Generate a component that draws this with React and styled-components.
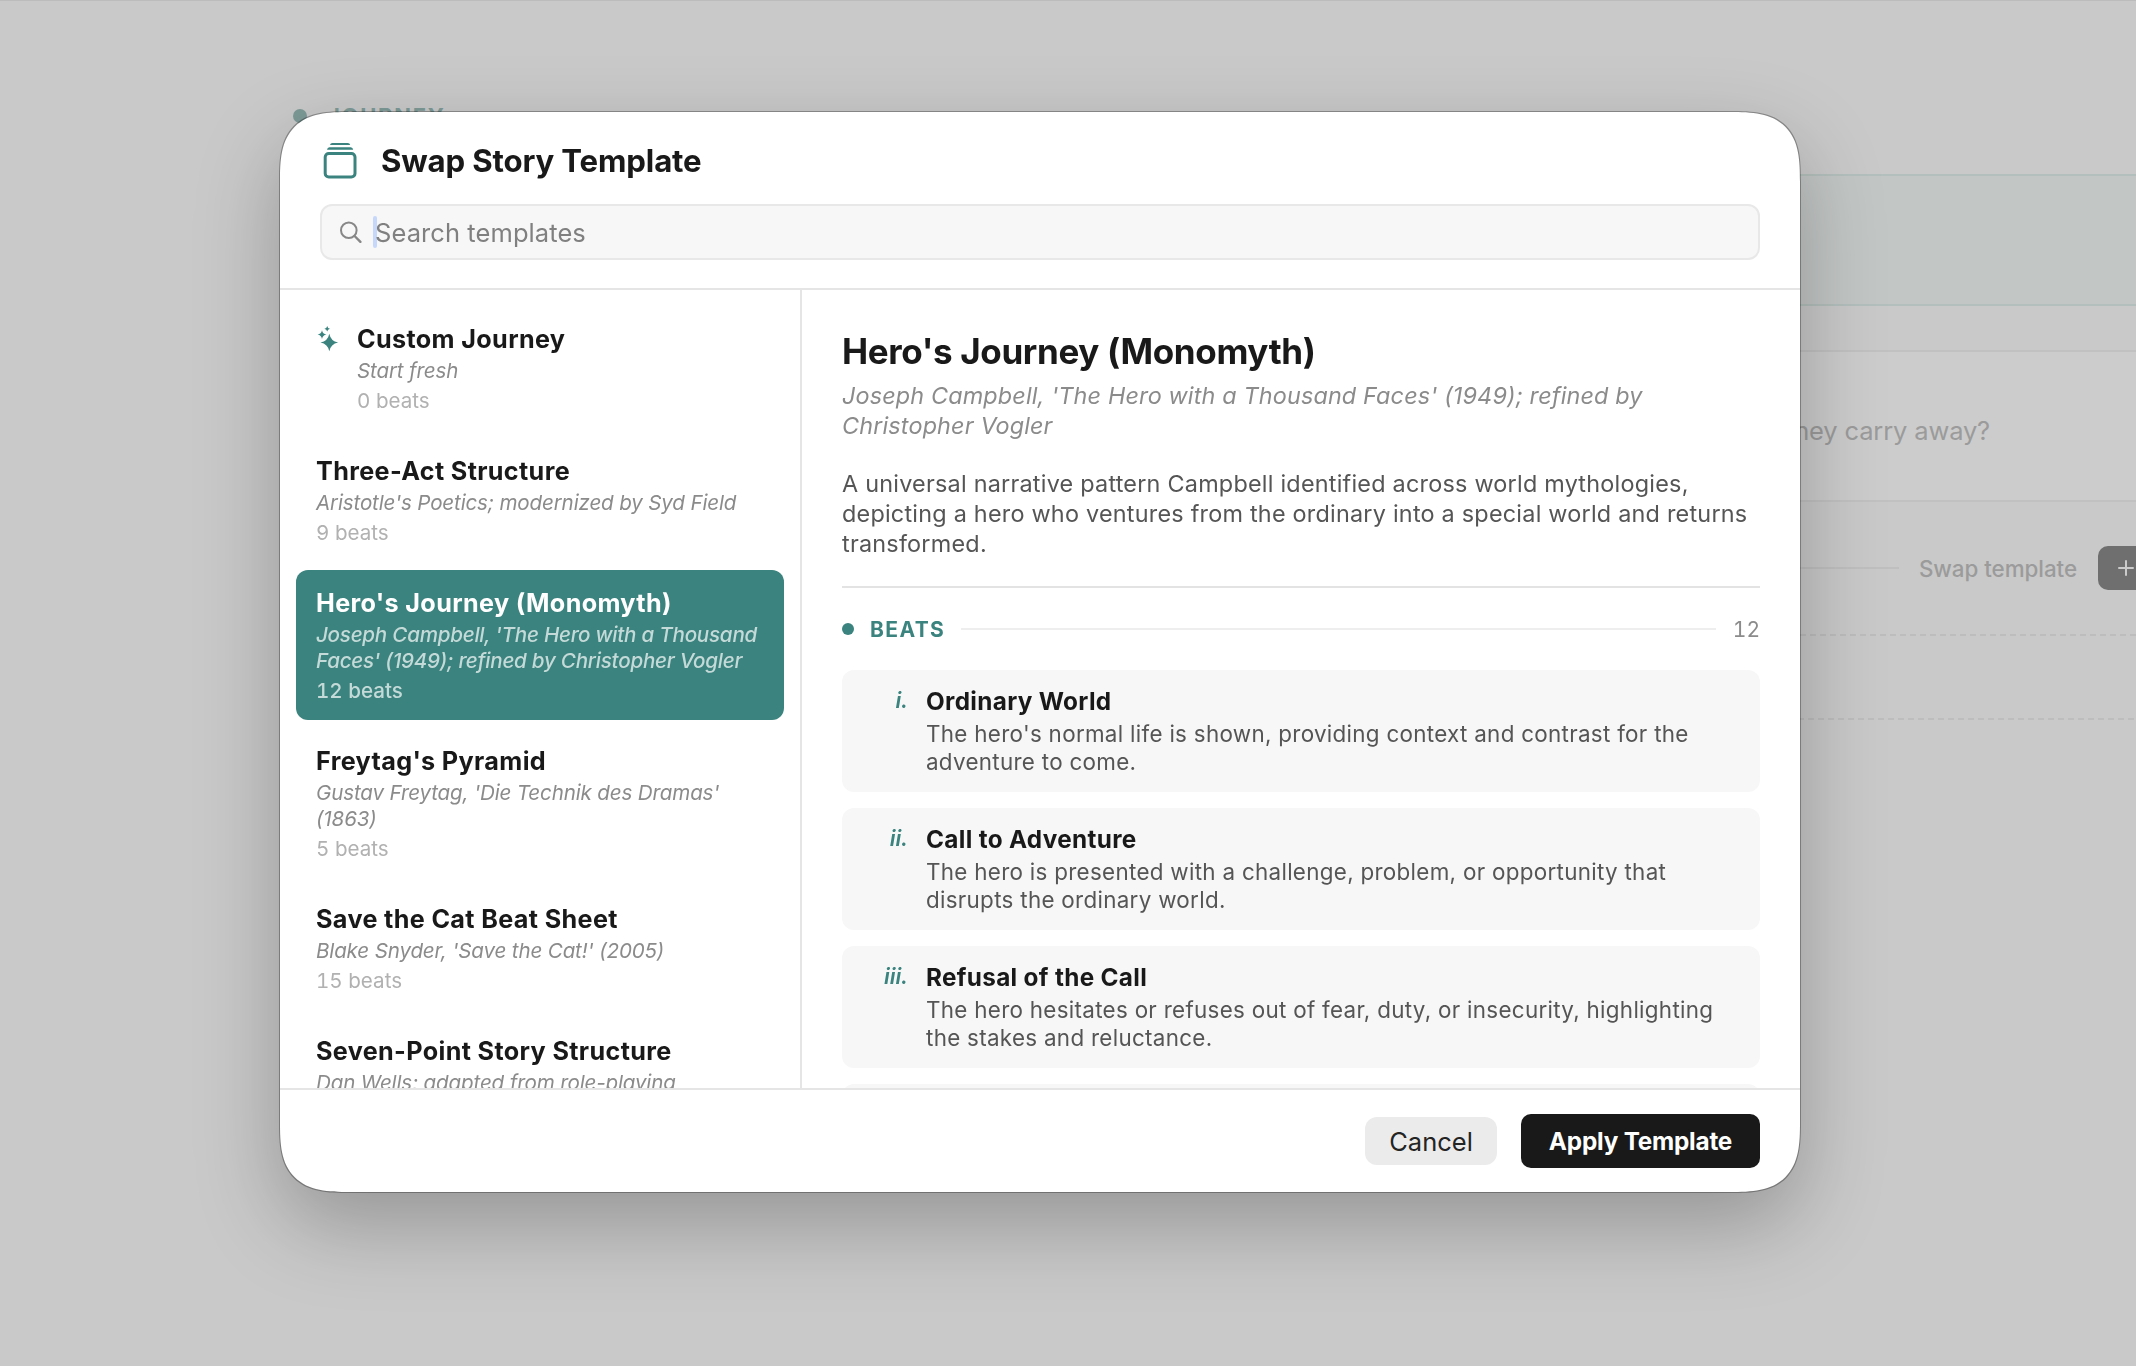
import styled, { createGlobalStyle, css } from 'styled-components';

const templates = [
    { name: 'Custom Journey', source: 'Start fresh', beats: 0, custom: true },
    { name: 'Three-Act Structure', source: "Aristotle's Poetics; modernized by Syd Field", beats: 9 },
    {
        name: "Hero's Journey (Monomyth)",
        source: "Joseph Campbell, 'The Hero with a Thousand Faces' (1949); refined by Christopher Vogler",
        beats: 12,
        selected: true,
    },
    { name: "Freytag's Pyramid", source: "Gustav Freytag, 'Die Technik des Dramas' (1863)", beats: 5 },
    { name: 'Save the Cat Beat Sheet', source: "Blake Snyder, 'Save the Cat!' (2005)", beats: 15 },
    { name: 'Seven-Point Story Structure', source: 'Dan Wells; adapted from role-playing', beats: 7 },
];

const beats = [
    {
        numeral: 'i.',
        name: 'Ordinary World',
        text: "The hero's normal life is shown, providing context and contrast for the adventure to come.",
    },
    {
        numeral: 'ii.',
        name: 'Call to Adventure',
        text: 'The hero is presented with a challenge, problem, or opportunity that disrupts the ordinary world.',
    },
    {
        numeral: 'iii.',
        name: 'Refusal of the Call',
        text: 'The hero hesitates or refuses out of fear, duty, or insecurity, highlighting the stakes and reluctance.',
    },
];

const GlobalStyle = createGlobalStyle`
    * {
        box-sizing: border-box;
    }

    body {
        margin: 0;
        overflow: hidden;
        background: #c9c9c9;
        color: #191919;
        font-family: Inter, 'Liberation Sans', sans-serif;
    }

    p, h1, h2, h3 {
        margin: 0;
    }
`;

/* ---- Page behind the dialog ---- */

const Page = styled.main`
    height: 1366px;
    padding: 99px 0 0 293px;
    border-top: 1px solid #bcbcbc;
    overflow: hidden;
`;

const PageColumn = styled.div`
    width: 1965px;
`;

const JourneyLabel = styled.h2`
    display: flex;
    align-items: center;
    gap: 20px;
    height: 32px;
    margin-bottom: 42px;
    color: #7d9a97;
    font-size: 22px;
    font-weight: 700;
    letter-spacing: 1.7px;

    &::before {
        content: '';
        width: 14px;
        height: 14px;
        border-radius: 50%;
        background: #7d9a97;
    }
`;

const Banner = styled.div`
    height: 132px;
    margin-bottom: 44px;
    border: 2px solid #b3bfbc;
    background: #c2c6c5;
`;

const PromptCard = styled.div`
    display: flex;
    align-items: center;
    justify-content: flex-end;
    height: 152px;
    padding: 8px 266px 0 0;
    border: 2px solid #c1c1c1;
    background: #cccccc;
    color: #9b9b9b;
    font-size: 25.5px;
    letter-spacing: -0.15px;
    white-space: nowrap;
`;

const PageToolbar = styled.div`
    display: flex;
    align-items: center;
    height: 132px;
`;

const PageRule = styled.div`
    flex: 1;
    height: 2px;
    margin-right: 20px;
    background: #bfbfbf;
`;

const SwapLink = styled.span`
    margin-right: 21px;
    color: #9b9b9b;
    font-size: 22.4px;
    font-weight: 550;
    letter-spacing: -0.05px;
`;

const AddButton = styled.button`
    display: flex;
    align-items: center;
    width: 160px;
    height: 44px;
    padding: 0 0 0 20px;
    border: 0;
    border-radius: 10px;
    background: #6f6f6f;
    color: #cbcbcb;
`;

const dashes = 'repeating-linear-gradient(to right, #bdbdbd 0 6px, transparent 6px 10px)';

const EmptySlot = styled.div`
    height: 86px;
    background:
        ${dashes} 7px 0 / 100% 2px no-repeat,
        ${dashes} 5px 100% / 100% 2px no-repeat;
`;

/* ---- Dialog ---- */

const Overlay = styled.div`
    position: fixed;
    inset: 0;
    padding: 112px 0 0 280px;
`;

const Dialog = styled.section`
    display: flex;
    flex-direction: column;
    width: 1520px;
    height: 1080px;
    border-radius: 70px;
    corner-shape: superellipse(1.55);
    background: #ffffff;
    box-shadow:
        0 0 0 1px rgba(0, 0, 0, 0.3),
        0 32px 84px rgba(0, 0, 0, 0.26);
`;

const Header = styled.header`
    height: 178px;
    padding: 26px 40px 0;
    border-bottom: 2px solid #e5e5e5;
`;

const TitleRow = styled.div`
    display: flex;
    align-items: center;
    gap: 21px;
    height: 44px;
    margin-bottom: 22px;
`;

const Title = styled.h1`
    padding-top: 1px;
    font-size: 31.2px;
    font-weight: 650;
    line-height: 38px;
    letter-spacing: -0.15px;
`;

const SearchField = styled.div`
    display: flex;
    align-items: center;
    height: 56px;
    padding: 0 18px;
    border: 2px solid #e8e8e8;
    border-radius: 12px;
    background: #f7f7f7;
`;

const Caret = styled.span`
    width: 4px;
    height: 32px;
    margin: 0 -2px 0 11px;
    border-radius: 2px;
    background: #c5d7fb;
`;

const Placeholder = styled.span`
    padding-top: 2px;
    color: #808080;
    font-size: 25.5px;
    line-height: 32px;
    letter-spacing: 0.08px;
`;

const Body = styled.div`
    display: flex;
    height: 798px;
`;

const Sidebar = styled.nav`
    display: flex;
    flex-direction: column;
    gap: 8px;
    width: 522px;
    padding: 16px;
    border-right: 2px solid #e5e5e5;
    overflow: hidden;
`;

const ItemSource = styled.p`
    margin: 3px 0 4px;
    color: #8b8b8b;
    font-size: 20.6px;
    font-style: italic;
    line-height: 26px;
    letter-spacing: -0.16px;
`;

const ItemBeats = styled.p`
    color: #b1b1b1;
    font-size: 20.6px;
    font-variant-numeric: tabular-nums;
    line-height: 26px;
`;

const TemplateItem = styled.div`
    display: flex;
    flex-shrink: 0;
    gap: 18px;
    padding: 17px 20px 16px;
    border-radius: 12px;

    ${(props) => props.$selected && css`
        background: #3b837e;
        color: #ffffff;

        ${ItemSource}, ${ItemBeats} {
            color: #c4dad8;
            font-weight: 500;
        }

        ${ItemSource} {
            letter-spacing: -0.24px;
        }
    `}
`;

const ItemName = styled.h3`
    font-size: 25.2px;
    font-weight: 650;
    line-height: 32px;
    letter-spacing: 0.35px;
`;

const Detail = styled.div`
    flex: 1;
    padding: 39px 40px 0;
    overflow: hidden;
`;

const DetailTitle = styled.h2`
    font-size: 35px;
    font-weight: 650;
    line-height: 44px;
    letter-spacing: -0.35px;
`;

const DetailSource = styled.p`
    margin: 8px 0 28px;
    color: #8b8b8b;
    font-size: 23.4px;
    font-style: italic;
    line-height: 30px;
    letter-spacing: 0.15px;
`;

const Description = styled.p`
    color: #555555;
    font-size: 23.4px;
    line-height: 30px;
    letter-spacing: 0.23px;
`;

const Divider = styled.div`
    height: 2px;
    margin: 27px 0 28px;
    background: #e3e3e3;
`;

const BeatsHeader = styled.div`
    display: flex;
    align-items: center;
    height: 26px;
    margin-bottom: 28px;
    color: #3a837e;
    font-size: 21px;
    font-weight: 650;
    letter-spacing: 1.4px;
`;

const BeatsDot = styled.span`
    width: 12px;
    height: 12px;
    margin-right: 16px;
    border-radius: 50%;
    background: #3a837e;
`;

const BeatsRule = styled.div`
    flex: 1;
    height: 2px;
    margin: 0 17px 0 16px;
    background: #eeeeee;
`;

const BeatsCount = styled.span`
    color: #8b8b8b;
    font-weight: 400;
    font-variant-numeric: tabular-nums;
    letter-spacing: 0;
`;

const BeatList = styled.div`
    display: flex;
    flex-direction: column;
    gap: 16px;
`;

const BeatCard = styled.article`
    display: flex;
    gap: 19px;
    min-height: 122px;
    padding: 16px 20px;
    border-radius: 12px;
    background: #f7f7f7;
`;

const Numeral = styled.span`
    width: 46px;
    color: #3a837e;
    font-size: 22px;
    font-style: italic;
    font-weight: 600;
    line-height: 28px;
    letter-spacing: -0.1px;
    text-align: right;
`;

const BeatContent = styled.div`
    flex: 1;
    margin-left: -1px;
`;

const BeatName = styled.h3`
    margin-bottom: 4px;
    font-size: 24.3px;
    font-weight: 650;
    line-height: 30px;
    letter-spacing: 0.33px;
`;

const BeatText = styled.p`
    color: #555555;
    font-size: 22.4px;
    line-height: 28px;
    letter-spacing: 0.3px;
`;

const Footer = styled.footer`
    display: flex;
    align-items: center;
    justify-content: flex-end;
    gap: 24px;
    height: 104px;
    padding: 0 40px;
    border-top: 2px solid #e5e5e5;
`;

const Button = styled.button`
    width: ${(props) => (props.$primary ? '239px' : '132px')};
    height: ${(props) => (props.$primary ? '54px' : '48px')};
    padding: 0;
    border: 0;
    border-radius: ${(props) => (props.$primary ? '10px' : '12px')};
    background: ${(props) => (props.$primary ? '#191919' : '#ebebeb')};
    color: ${(props) => (props.$primary ? '#ffffff' : '#242424')};
    font-family: inherit;
    font-size: ${(props) => (props.$primary ? '24.3px' : '25.5px')};
    font-weight: ${(props) => (props.$primary ? 650 : 400)};
    letter-spacing: ${(props) => (props.$primary ? '-0.2px' : '0')};
`;

const SparkleSlot = styled.span`
    width: 23px;
    padding-top: 3px;
`;

function StackIcon() {
    return (
        <svg width="40" height="40" viewBox="0 0 40 40" fill="#3a837e">
            <path d="M10 5 Q10.4 3 12.4 3 H27.8 Q29.8 3 30.2 5 Z" />
            <path d="M7 9.8 Q7.4 7.2 9.4 7.2 H30.8 Q32.8 7.2 33.2 9.8 Z" />
            <rect x="5.2" y="13.5" width="29.8" height="23.6" rx="3.6" fill="none" stroke="#3a837e" strokeWidth="3" />
        </svg>
    );
}

function SearchIcon() {
    return (
        <svg width="22" height="22" viewBox="0 0 22 22" fill="none" stroke="#878787" strokeWidth="2" strokeLinecap="round">
            <circle cx="8.8" cy="9.2" r="7.8" />
            <path d="M14.6 15 L20.4 20.8" strokeWidth="2.4" />
        </svg>
    );
}

function star(cx, cy, r) {
    const k = r * 0.16;
    return `M${cx} ${cy - r} Q${cx + k} ${cy - k} ${cx + r} ${cy} Q${cx + k} ${cy + k} ${cx} ${cy + r} Q${cx - k} ${cy + k} ${cx - r} ${cy} Q${cx - k} ${cy - k} ${cx} ${cy - r} Z`;
}

function SparklesIcon() {
    return (
        <svg width="23" height="28" viewBox="0 0 23 28" fill="#3a837e">
            <path d={star(13.3, 16.5, 8.8)} />
            <path d={star(6, 8.6, 4.4)} />
            <path d={star(11.2, 2.8, 2.8)} />
        </svg>
    );
}

function PlusIcon() {
    return (
        <svg width="16" height="16" viewBox="0 0 16 16" stroke="#cbcbcb" strokeWidth="2" strokeLinecap="round">
            <path d="M8 1 V15 M1 8 H15" />
        </svg>
    );
}

function JourneyPage() {
    return (
        <Page>
            <PageColumn>
                <JourneyLabel>JOURNEY</JourneyLabel>
                <Banner />
                <PromptCard>they carry away?</PromptCard>
                <PageToolbar>
                    <PageRule />
                    <SwapLink>Swap template</SwapLink>
                    <AddButton aria-label="Add">
                        <PlusIcon />
                    </AddButton>
                </PageToolbar>
                <EmptySlot />
            </PageColumn>
        </Page>
    );
}

function TemplateList() {
    return (
        <Sidebar>
            {templates.map((item) => (
                <TemplateItem key={item.name} $selected={item.selected}>
                    {item.custom && (
                        <SparkleSlot>
                            <SparklesIcon />
                        </SparkleSlot>
                    )}
                    <div>
                        <ItemName>{item.name}</ItemName>
                        <ItemSource>{item.source}</ItemSource>
                        <ItemBeats>{item.beats} beats</ItemBeats>
                    </div>
                </TemplateItem>
            ))}
        </Sidebar>
    );
}

function TemplateDetail() {
    return (
        <Detail>
            <DetailTitle>Hero's Journey (Monomyth)</DetailTitle>
            <DetailSource>
                Joseph Campbell, 'The Hero with a Thousand Faces' (1949); refined by Christopher Vogler
            </DetailSource>
            <Description>
                A universal narrative pattern Campbell identified across world mythologies, depicting a hero who
                ventures from the ordinary into a special world and returns transformed.
            </Description>
            <Divider />
            <BeatsHeader>
                <BeatsDot />
                BEATS
                <BeatsRule />
                <BeatsCount>12</BeatsCount>
            </BeatsHeader>
            <BeatList>
                {beats.map((beat) => (
                    <BeatCard key={beat.name}>
                        <Numeral>{beat.numeral}</Numeral>
                        <BeatContent>
                            <BeatName>{beat.name}</BeatName>
                            <BeatText>{beat.text}</BeatText>
                        </BeatContent>
                    </BeatCard>
                ))}
                {/* next card, only its top edge is in view */}
                <BeatCard />
            </BeatList>
        </Detail>
    );
}

function App() {
    return (
        <>
            <GlobalStyle />
            <JourneyPage />
            <Overlay>
                <Dialog>
                    <Header>
                        <TitleRow>
                            <StackIcon />
                            <Title>Swap Story Template</Title>
                        </TitleRow>
                        <SearchField>
                            <SearchIcon />
                            <Caret />
                            <Placeholder>Search templates</Placeholder>
                        </SearchField>
                    </Header>
                    <Body>
                        <TemplateList />
                        <TemplateDetail />
                    </Body>
                    <Footer>
                        <Button>Cancel</Button>
                        <Button $primary>Apply Template</Button>
                    </Footer>
                </Dialog>
            </Overlay>
        </>
    );
}

export default App;
